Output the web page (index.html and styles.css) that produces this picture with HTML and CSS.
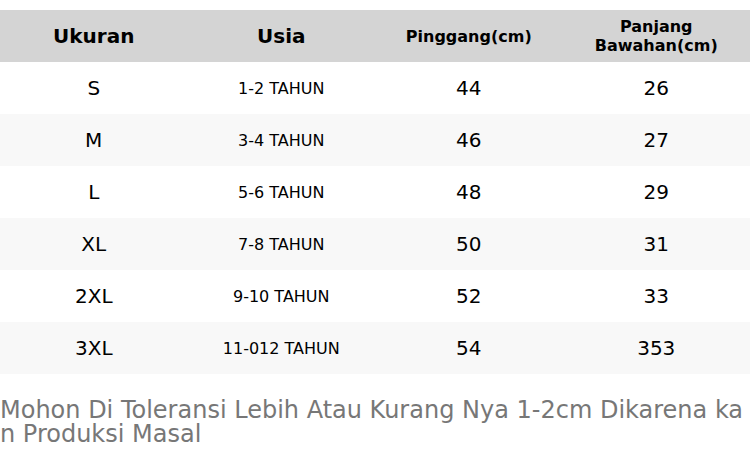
FILE: index.html
```html
<!DOCTYPE html>
<html lang="id">
<head>
<meta charset="utf-8">
<link rel="stylesheet" href="styles.css">
</head>
<body>
<div class="page">
  <table class="size-table">
    <thead>
      <tr>
        <th class="h-big">Ukuran</th>
        <th class="h-big">Usia</th>
        <th class="h-small">Pinggang(cm)</th>
        <th class="h-small">Panjang<br>Bawahan(cm)</th>
      </tr>
    </thead>
    <tbody>
      <tr><td class="big">S</td><td class="small">1-2 TAHUN</td><td class="big">44</td><td class="big">26</td></tr>
      <tr><td class="big">M</td><td class="small">3-4 TAHUN</td><td class="big">46</td><td class="big">27</td></tr>
      <tr><td class="big">L</td><td class="small">5-6 TAHUN</td><td class="big">48</td><td class="big">29</td></tr>
      <tr><td class="big">XL</td><td class="small">7-8 TAHUN</td><td class="big">50</td><td class="big">31</td></tr>
      <tr><td class="big">2XL</td><td class="small">9-10 TAHUN</td><td class="big">52</td><td class="big">33</td></tr>
      <tr><td class="big">3XL</td><td class="small">11-012 TAHUN</td><td class="big">54</td><td class="big">353</td></tr>
    </tbody>
  </table>
  <p class="note">Mohon Di Toleransi Lebih Atau Kurang Nya 1-2cm Dikarena kan Produksi Masal</p>
</div>
</body>
</html>
```
FILE: styles.css
```css
html, body {
  margin: 0;
  padding: 0;
  background: #ffffff;
}
body {
  font-family: "DejaVu Sans", sans-serif;
  color: #000;
}
.page {
  padding-top: 10px;
  width: 750px;
}
.size-table {
  width: 750px;
  border-collapse: collapse;
  table-layout: fixed;
}
.size-table th,
.size-table td {
  text-align: center;
  vertical-align: middle;
  padding: 0;
  height: 52px;
}
.size-table thead tr {
  background: #d4d4d4;
}
.h-big {
  font-size: 20px;
  font-weight: bold;
}
.h-small {
  font-size: 16px;
  font-weight: bold;
  line-height: 19px;
}
.size-table tbody tr:nth-child(even) {
  background: #f8f8f8;
}
.big {
  font-size: 20px;
}
.small {
  font-size: 16px;
}
.note {
  margin: 24px 0 0 0;
  font-family: "DejaVu Sans", sans-serif;
  font-size: 24px;
  line-height: 24px;
  color: #777777;
  word-break: break-all;
}
```
